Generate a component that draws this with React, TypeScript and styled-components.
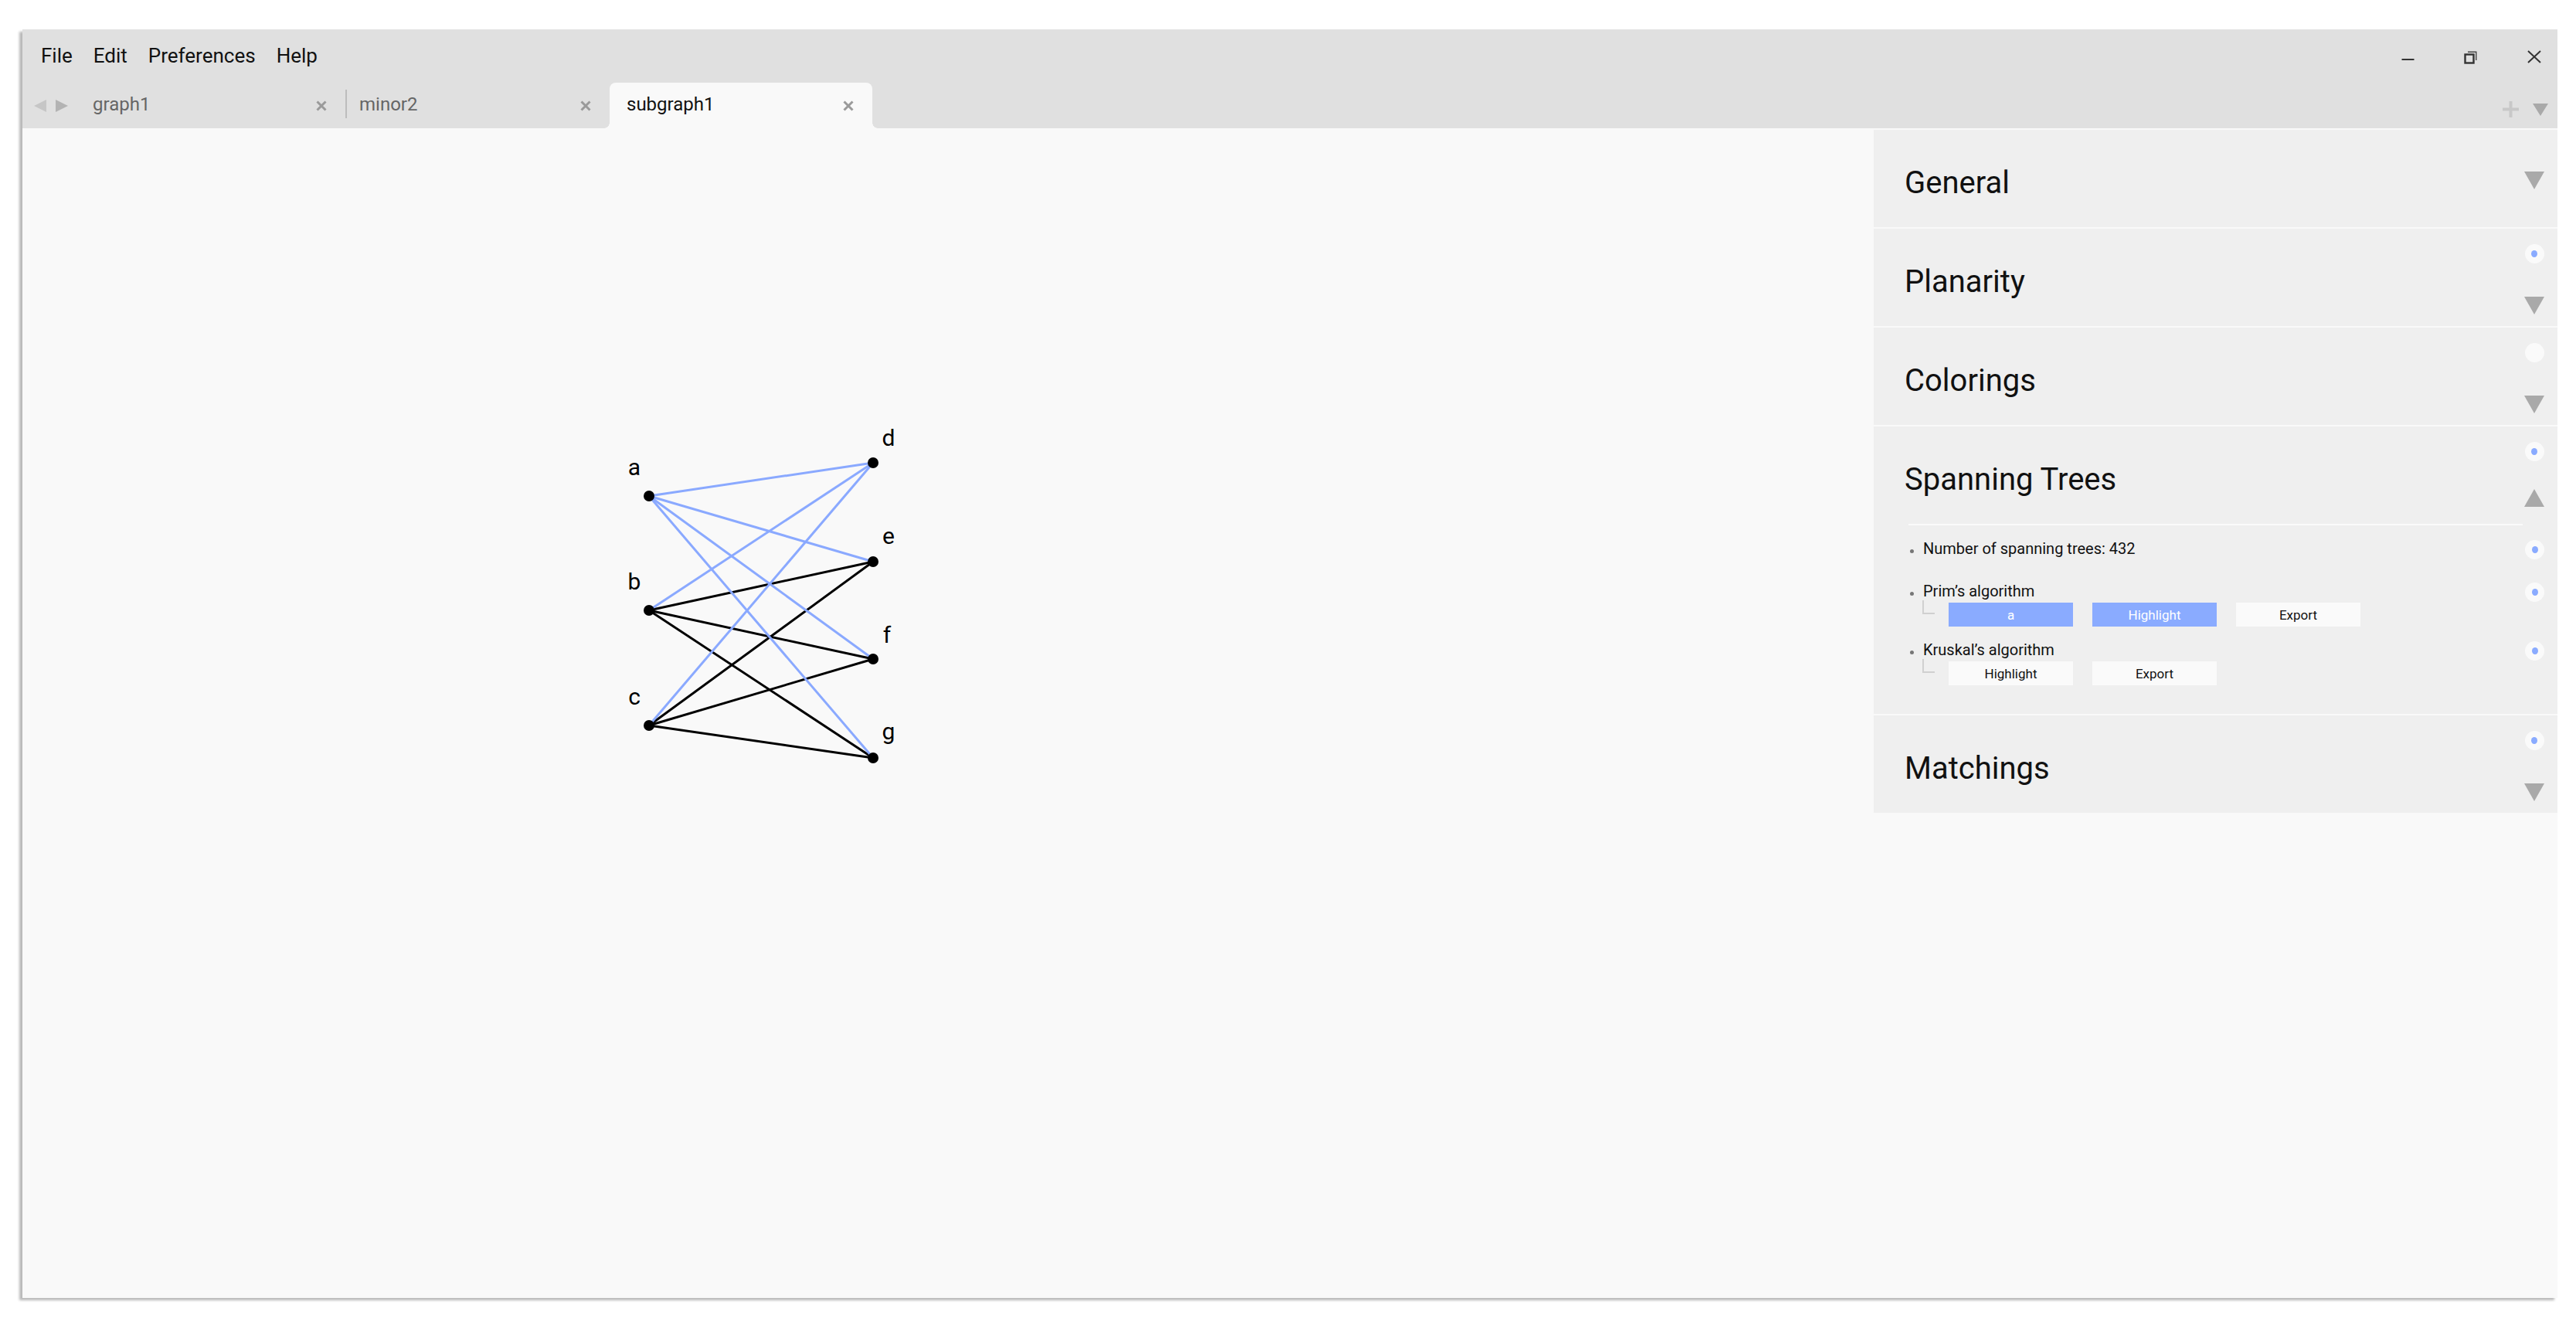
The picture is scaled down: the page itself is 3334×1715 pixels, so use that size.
import React from "react";
import styled, { createGlobalStyle } from "styled-components";

const GlobalStyle = createGlobalStyle`
  html, body { margin: 0; padding: 0; background: #ffffff; }
  body { font-family: Roboto, "Noto Sans", "Liberation Sans", sans-serif; }
  * { box-sizing: border-box; }
`;

const Page = styled.div`
  width: 3334px;
  height: 1715px;
  padding: 38px 0 0 29px;
`;

const Window = styled.div`
  width: 3281px;
  height: 1642px;
  display: flex;
  flex-direction: column;
  background: #f9f9f9;
  box-shadow: -4px 3px 3px rgba(0, 0, 0, 0.28);
`;

const TitleBar = styled.div`
  height: 69px;
  display: flex;
  align-items: center;
  background: #e0e0e0;
  padding-left: 24px;
`;

const Menu = styled.nav`
  display: flex;
  gap: 27px;
  padding-bottom: 1px;
`;

const MenuItem = styled.span`
  font-size: 26px;
  color: #111;
`;

const Controls = styled.div`
  margin-left: auto;
  display: flex;
  gap: 22px;
  height: 100%;
`;

const ControlButton = styled.div`
  width: 60px;
  display: flex;
  align-items: center;
  justify-content: center;
  padding-top: 2px;
`;

const TabRow = styled.div`
  height: 59px;
  display: flex;
  background: #e0e0e0;
`;

const TabArrows = styled.div`
  width: 78px;
  display: flex;
  align-items: center;
  gap: 12px;
  padding-left: 15px;
`;

const ArrowTri = styled.span<{ $dir: "left" | "right"; $color: string }>`
  width: 0;
  height: 0;
  border-top: 8.5px solid transparent;
  border-bottom: 8.5px solid transparent;
  ${(p) =>
    p.$dir === "left"
      ? `border-right: 16px solid ${p.$color};`
      : `border-left: 16px solid ${p.$color};`}
`;

const Tab = styled.div<{ $active?: boolean; $pad: number }>`
  position: relative;
  width: 340px;
  display: flex;
  align-items: center;
  padding-left: ${(p) => p.$pad}px;
  padding-right: 24px;
  font-size: 24px;
  color: ${(p) => (p.$active ? "#111" : "#666")};
  background: ${(p) => (p.$active ? "#f9f9f9" : "transparent")};
  border-radius: 8px 8px 0 0;
  ${(p) =>
    p.$active
      ? `
    &::before, &::after {
      content: "";
      position: absolute;
      bottom: 0;
      width: 7px;
      height: 7px;
    }
    &::before {
      left: -7px;
      background: radial-gradient(circle at 0 0, transparent 6.5px, #f9f9f9 7px);
    }
    &::after {
      right: -7px;
      background: radial-gradient(circle at 100% 0, transparent 6.5px, #f9f9f9 7px);
    }
  `
      : ""}
`;

const TabLabel = styled.span`
  flex: 1;
  padding-bottom: 4px;
`;

const TabSeparator = styled.span`
  width: 2px;
  margin: 9px 0 13px;
  background: #bdbdbd;
`;

const TabActions = styled.div`
  margin-left: auto;
  display: flex;
  align-items: center;
  gap: 18px;
  padding: 10px 12px 0 0;
`;

const DropTri = styled.span<{ $up?: boolean; $w?: number; $h?: number }>`
  width: 0;
  height: 0;
  border-left: ${(p) => (p.$w ?? 26) / 2}px solid transparent;
  border-right: ${(p) => (p.$w ?? 26) / 2}px solid transparent;
  ${(p) =>
    p.$up
      ? `border-bottom: ${p.$h ?? 23}px solid #a9a9a9;`
      : `border-top: ${p.$h ?? 23}px solid #a9a9a9;`}
`;

const Content = styled.div`
  flex: 1;
  display: flex;
  min-height: 0;
`;

const Canvas = styled.div`
  flex: 1;
  position: relative;
`;

const GraphSvg = styled.svg`
  position: absolute;
  left: 0;
  top: 0;
  width: 100%;
  height: 100%;
`;

const SidePanel = styled.aside`
  width: 885px;
  margin-top: 2px;
  display: flex;
  flex-direction: column;
  gap: 2px;
  align-self: flex-start;
`;

const Section = styled.section`
  background: #efefef;
`;

const SectionHeader = styled.div`
  height: 126px;
  display: flex;
  align-items: center;
  padding: 0 17px 0 40px;
`;

const SectionTitle = styled.h2`
  flex: 1;
  margin: 0;
  font-weight: 400;
  font-size: 40px;
  color: #111;
  padding-top: 10px;
`;

const Indicator = styled.div<{ $center?: boolean; $padBottom?: number }>`
  align-self: stretch;
  width: 26px;
  display: flex;
  flex-direction: column;
  align-items: center;
  justify-content: ${(p) => (p.$center ? "center" : "space-between")};
  padding: 20px 0 ${(p) => p.$padBottom ?? 15}px;
`;

const StatusDot = styled.span<{ $on?: boolean }>`
  width: 25px;
  height: 25px;
  flex: none;
  border-radius: 50%;
  background: #fafafa;
  display: flex;
  align-items: center;
  justify-content: center;
  &::after {
    content: "";
    width: 8px;
    height: 9px;
    border-radius: 50%;
    background: ${(p) => (p.$on ? "#8aabff" : "transparent")};
  }
`;

const Divider = styled.div`
  height: 2px;
  margin: 0 45px;
  background: #fafafa;
`;

const SectionBody = styled.div`
  padding: 17px 17px 37px 47px;
  display: flex;
  flex-direction: column;
  gap: 17px;
`;

const Item = styled.div<{ $loose?: boolean }>`
  display: flex;
  flex-direction: column;
  padding-bottom: ${(p) => (p.$loose ? 10 : 0)}px;
`;

const ItemRow = styled.div`
  height: 28px;
  display: flex;
  align-items: center;
`;

const Bullet = styled.span`
  width: 5px;
  height: 5px;
  border-radius: 50%;
  background: #777;
  margin: 4px 12px 0 0;
`;

const ItemLabel = styled.span`
  flex: 1;
  font-size: 20px;
  color: #111;
  padding-bottom: 2px;
`;

const ButtonRow = styled.div`
  display: flex;
  align-items: flex-start;
  padding-left: 16px;
`;

const Connector = styled.span`
  width: 16px;
  height: 18px;
  margin: -3px 18px 0 0;
  border-left: 2px solid #d0d0d0;
  border-bottom: 2px solid #d0d0d0;
`;

const Buttons = styled.div`
  display: flex;
  gap: 25px;
`;

const ActionButton = styled.button<{ $primary?: boolean }>`
  width: 161px;
  height: 31px;
  border: none;
  padding: 0;
  font-family: inherit;
  font-size: 17px;
  background: ${(p) => (p.$primary ? "#8aabff" : "#fafafa")};
  color: ${(p) => (p.$primary ? "#ffffff" : "#111")};
`;

type Pt = { x: number; y: number; lx: number; ly: number };
const nodes: Record<string, Pt> = {
  a: { x: 840, y: 642, lx: 821, ly: 615 },
  b: { x: 840, y: 790, lx: 821, ly: 763 },
  c: { x: 840, y: 939, lx: 821, ly: 912 },
  d: { x: 1130, y: 599, lx: 1150, ly: 577 },
  e: { x: 1130, y: 727, lx: 1150, ly: 704 },
  f: { x: 1130, y: 853, lx: 1148, ly: 832 },
  g: { x: 1130, y: 981, lx: 1150, ly: 957 },
};

const edges: [string, string, boolean][] = [
  ["b", "e", false],
  ["b", "f", false],
  ["b", "g", false],
  ["c", "e", false],
  ["c", "f", false],
  ["c", "g", false],
  ["a", "d", true],
  ["a", "e", true],
  ["a", "f", true],
  ["a", "g", true],
  ["b", "d", true],
  ["c", "d", true],
];

const Graph = () => (
  <GraphSvg>
    <g transform="translate(-29,-166)">
      {edges.map(([u, v, blue]) => (
        <line
          key={u + v}
          x1={nodes[u].x}
          y1={nodes[u].y}
          x2={nodes[v].x}
          y2={nodes[v].y}
          stroke={blue ? "#8aa9ff" : "#000"}
          strokeWidth={3}
        />
      ))}
      {Object.entries(nodes).map(([k, n]) => (
        <g key={k}>
          <circle cx={n.x} cy={n.y} r={7} fill="#000" />
          <text
            x={n.lx}
            y={n.ly}
            textAnchor="middle"
            fontFamily="Roboto, sans-serif"
            fontSize={30}
            fill="#000"
          >
            {k}
          </text>
        </g>
      ))}
    </g>
  </GraphSvg>
);

const MinimizeIcon = () => (
  <svg width="17" height="20" viewBox="0 0 17 20">
    <line x1="0.5" y1="13" x2="16.5" y2="13" stroke="#333" strokeWidth="2" />
  </svg>
);

const RestoreIcon = () => (
  <svg width="18" height="18" viewBox="0 0 18 18">
    <rect x="1.5" y="5.5" width="11" height="11" fill="none" stroke="#333" strokeWidth="2.4" />
    <path d="M5 2.2 H15.8 V13" fill="none" stroke="#444" strokeWidth="1.4" />
  </svg>
);

const CloseIcon = () => (
  <svg width="18" height="18" viewBox="0 0 18 18">
    <path d="M1 1 L17 16 M17 1 L1 16" stroke="#333" strokeWidth="2" />
  </svg>
);

const TabClose = () => (
  <svg width="14" height="14" viewBox="0 0 14 14">
    <path d="M1.5 1.5 L12.5 12.5 M12.5 1.5 L1.5 12.5" stroke="#9a9a9a" strokeWidth="3" />
  </svg>
);

const PlusIcon = () => (
  <svg width="21" height="21" viewBox="0 0 21 21">
    <path d="M10.5 0 V21 M0 10.5 H21" stroke="#c8c8c8" strokeWidth="4" />
  </svg>
);

type SectionProps = {
  title: string;
  dot?: "on" | "off";
  open?: boolean;
  children?: React.ReactNode;
};

const PanelSection = ({ title, dot, open, children }: SectionProps) => (
  <Section>
    <SectionHeader>
      <SectionTitle>{title}</SectionTitle>
      <Indicator $center={!dot} $padBottom={open ? 22 : 15}>
        {dot && <StatusDot $on={dot === "on"} />}
        <DropTri $up={open} />
      </Indicator>
    </SectionHeader>
    {children}
  </Section>
);

export default function App() {
  return (
    <>
      <GlobalStyle />
      <Page>
        <Window>
          <TitleBar>
            <Menu>
              <MenuItem>File</MenuItem>
              <MenuItem>Edit</MenuItem>
              <MenuItem>Preferences</MenuItem>
              <MenuItem>Help</MenuItem>
            </Menu>
            <Controls>
              <ControlButton>
                <MinimizeIcon />
              </ControlButton>
              <ControlButton>
                <RestoreIcon />
              </ControlButton>
              <ControlButton>
                <CloseIcon />
              </ControlButton>
            </Controls>
          </TitleBar>
          <TabRow>
            <TabArrows>
              <ArrowTri $dir="left" $color="#c6c6c6" />
              <ArrowTri $dir="right" $color="#b3b3b3" />
            </TabArrows>
            <Tab $pad={13}>
              <TabLabel>graph1</TabLabel>
              <TabClose />
            </Tab>
            <TabSeparator />
            <Tab $pad={16}>
              <TabLabel>minor2</TabLabel>
              <TabClose />
            </Tab>
            <Tab $active $pad={22}>
              <TabLabel>subgraph1</TabLabel>
              <TabClose />
            </Tab>
            <TabActions>
              <PlusIcon />
              <DropTri $w={20} $h={16} />
            </TabActions>
          </TabRow>
          <Content>
            <Canvas>
              <Graph />
            </Canvas>
            <SidePanel>
              <PanelSection title="General" />
              <PanelSection title="Planarity" dot="on" />
              <PanelSection title="Colorings" dot="off" />
              <PanelSection title="Spanning Trees" dot="on" open>
                <Divider />
                <SectionBody>
                  <Item $loose>
                    <ItemRow>
                      <Bullet />
                      <ItemLabel>Number of spanning trees: 432</ItemLabel>
                      <StatusDot $on />
                    </ItemRow>
                  </Item>
                  <Item>
                    <ItemRow>
                      <Bullet />
                      <ItemLabel>Prim’s algorithm</ItemLabel>
                      <StatusDot $on />
                    </ItemRow>
                    <ButtonRow>
                      <Connector />
                      <Buttons>
                        <ActionButton $primary>a</ActionButton>
                        <ActionButton $primary>Highlight</ActionButton>
                        <ActionButton>Export</ActionButton>
                      </Buttons>
                    </ButtonRow>
                  </Item>
                  <Item>
                    <ItemRow>
                      <Bullet />
                      <ItemLabel>Kruskal’s algorithm</ItemLabel>
                      <StatusDot $on />
                    </ItemRow>
                    <ButtonRow>
                      <Connector />
                      <Buttons>
                        <ActionButton>Highlight</ActionButton>
                        <ActionButton>Export</ActionButton>
                      </Buttons>
                    </ButtonRow>
                  </Item>
                </SectionBody>
              </PanelSection>
              <PanelSection title="Matchings" dot="on" />
            </SidePanel>
          </Content>
        </Window>
      </Page>
    </>
  );
}
